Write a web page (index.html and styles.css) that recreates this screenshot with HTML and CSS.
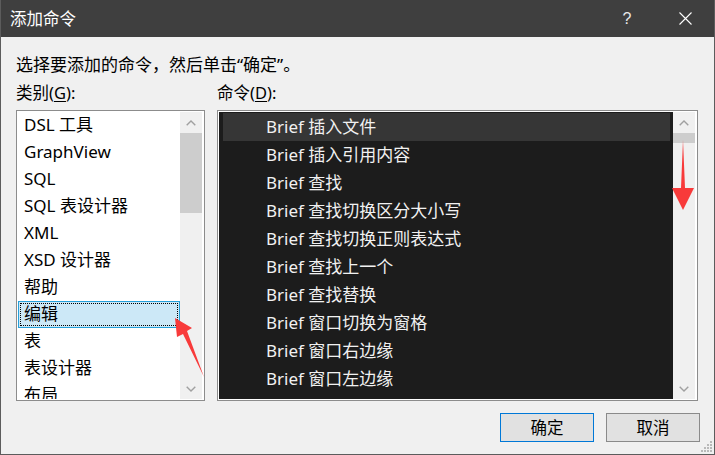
FILE: index.html
```html
<!DOCTYPE html>
<html lang="zh-CN">
<head>
<meta charset="utf-8">
<title>添加命令</title>
<link rel="stylesheet" href="styles.css">
</head>
<body>
<div class="window">
  <div class="titlebar">
    <span class="title">添加命令</span>
    <span class="tb-btn help">?</span>
    <span class="tb-btn close">
      <svg width="13" height="13" viewBox="0 0 13 13"><path d="M0.5 0.5 L12.5 12.5 M12.5 0.5 L0.5 12.5" stroke="#ffffff" stroke-width="1.1" fill="none"/></svg>
    </span>
  </div>
  <div class="body">
    <p class="intro">选择要添加的命令，然后单击“确定”。</p>
    <div class="columns">
      <div class="col col-left">
        <div class="label">类别(<u>G</u>):</div>
        <div class="listbox">
          <ul class="items light">
            <li>DSL 工具</li>
            <li>GraphView</li>
            <li>SQL</li>
            <li>SQL 表设计器</li>
            <li>XML</li>
            <li>XSD 设计器</li>
            <li>帮助</li>
            <li class="selected">编辑</li>
            <li>表</li>
            <li>表设计器</li>
            <li>布局</li>
          </ul>
          <div class="scrollbar">
            <div class="sb-btn"><svg width="10" height="6" viewBox="0 0 10 6"><polyline points="0.7,5.3 5,1 9.3,5.3" fill="none" stroke="#a0a0a0" stroke-width="1.4"/></svg></div>
            <div class="sb-thumb tall"></div>
            <div class="sb-track"></div>
            <div class="sb-btn"><svg width="10" height="6" viewBox="0 0 10 6"><polyline points="0.7,0.7 5,5 9.3,0.7" fill="none" stroke="#a0a0a0" stroke-width="1.4"/></svg></div>
          </div>
        </div>
      </div>
      <div class="col col-right">
        <div class="label">命令(<u>D</u>):</div>
        <div class="listbox">
          <ul class="items dark">
            <li class="current">Brief 插入文件</li>
            <li>Brief 插入引用内容</li>
            <li>Brief 查找</li>
            <li>Brief 查找切换区分大小写</li>
            <li>Brief 查找切换正则表达式</li>
            <li>Brief 查找上一个</li>
            <li>Brief 查找替换</li>
            <li>Brief 窗口切换为窗格</li>
            <li>Brief 窗口右边缘</li>
            <li>Brief 窗口左边缘</li>
          </ul>
          <div class="scrollbar">
            <div class="sb-btn"><svg width="10" height="6" viewBox="0 0 10 6"><polyline points="0.7,5.3 5,1 9.3,5.3" fill="none" stroke="#a0a0a0" stroke-width="1.4"/></svg></div>
            <div class="sb-thumb short"></div>
            <div class="sb-track"></div>
            <div class="sb-btn"><svg width="10" height="6" viewBox="0 0 10 6"><polyline points="0.7,0.7 5,5 9.3,0.7" fill="none" stroke="#a0a0a0" stroke-width="1.4"/></svg></div>
          </div>
        </div>
      </div>
    </div>
    <div class="buttons">
      <button class="btn default">确定</button>
      <button class="btn">取消</button>
    </div>
  </div>
  <svg class="overlay" width="715" height="455" viewBox="0 0 715 455">
    <polygon points="175,318 192,328 187,331 204,377 183,334 177,337" fill="#f83a3a"/>
    <polygon points="683,140 685,188 694,188 683,210 672,188 681,188" fill="#f83a3a"/>
  </svg>
  <svg class="grip" width="14" height="14" viewBox="0 0 14 14">
    <g fill="#b9b9b9">
      <rect x="11" y="2" width="2" height="2"/>
      <rect x="8" y="5" width="2" height="2"/><rect x="11" y="5" width="2" height="2"/>
      <rect x="5" y="8" width="2" height="2"/><rect x="8" y="8" width="2" height="2"/><rect x="11" y="8" width="2" height="2"/>
      <rect x="2" y="11" width="2" height="2"/><rect x="5" y="11" width="2" height="2"/><rect x="8" y="11" width="2" height="2"/><rect x="11" y="11" width="2" height="2"/>
    </g>
  </svg>
</div>
</body>
</html>
```
FILE: styles.css
```css
* { box-sizing: border-box; }
html, body { margin: 0; padding: 0; background: #f0f0f0; }
body { font-family: "Noto Sans", "Noto Sans CJK SC", sans-serif; color: #000; }

.window {
  position: relative;
  width: 715px;
  height: 455px;
  background: #f0f0f0;
  border: 1px solid #5c5c5c;
  border-top: none;
  display: flex;
  flex-direction: column;
  overflow: hidden;
}

.titlebar {
  height: 37px;
  flex: none;
  margin: 0 -1px;
  background: #3f3f3f;
  color: #fff;
  display: flex;
  align-items: center;
  padding-left: 10px;
}
.title { font-size: 16.5px; flex: 1; line-height: 37px; }
.tb-btn { display: flex; align-items: center; justify-content: center; height: 37px; }
.help { width: 56px; font-size: 16px; font-family: "Liberation Sans", sans-serif; color: #e8e8e8; }
.close { width: 60px; }

.body {
  flex: 1;
  padding: 18px 16px 0 15px;
  display: flex;
  flex-direction: column;
}

.intro { margin: 0; font-size: 17px; line-height: 20px; height: 20px; white-space: nowrap; }

.columns { display: flex; gap: 12px; margin-top: 8px; }
.col { display: flex; flex-direction: column; }
.col-left { width: 189px; }
.col-right { flex: 1; }

.label { font-size: 16.5px; line-height: 20px; height: 20px; margin-bottom: 7px; }
.label u { text-underline-offset: 2px; }

.listbox {
  height: 291px;
  border: 1px solid #8c8c8c;
  background: #fff;
  padding: 1px;
  display: flex;
}
.items { list-style: none; margin: 0; padding: 0; flex: 1; overflow: hidden; font-size: 17px; }

.items.light li {
  height: 27px;
  line-height: 24px;
  border: 1px solid transparent;
  padding-left: 5px;
  white-space: nowrap;
}
.items.light li.selected {
  background: #cce8f7;
  border-color: #26a0da;
  outline: 1px dotted #000;
  outline-offset: -3px;
}

.items.dark {
  background: #1c1c1c;
  color: #f1f1f1;
  padding: 1px 3px 0 4px;
}
.items.dark li {
  height: 28px;
  line-height: 27px;
  padding-left: 43px;
  white-space: nowrap;
}
.items.dark li.current { background: #363636; }

.scrollbar {
  width: 22px;
  flex: none;
  background: #f0f0f0;
  display: flex;
  flex-direction: column;
  margin-right: 1px;
}
.sb-btn { height: 21px; display: flex; align-items: center; justify-content: center; flex: none; }
.sb-thumb { background: #cdcdcd; flex: none; }
.sb-thumb.tall { height: 80px; }
.sb-thumb.short { height: 10px; }
.sb-track { flex: 1; }

.buttons {
  display: flex;
  justify-content: flex-end;
  gap: 12px;
  margin-top: 12px;
  margin-right: -2px;
}
.btn {
  width: 94px;
  height: 29px;
  background: #e1e1e1;
  border: 1px solid #8a8a8a;
  font-family: "Noto Sans", "Noto Sans CJK SC", sans-serif;
  font-size: 16.5px;
  color: #000;
  padding: 0;
  line-height: 26px;
}
.btn.default { border-color: #0078d7; }

.overlay { position: absolute; left: -1px; top: 0; pointer-events: none; }
.grip { position: absolute; right: 1px; bottom: 1px; }
```
